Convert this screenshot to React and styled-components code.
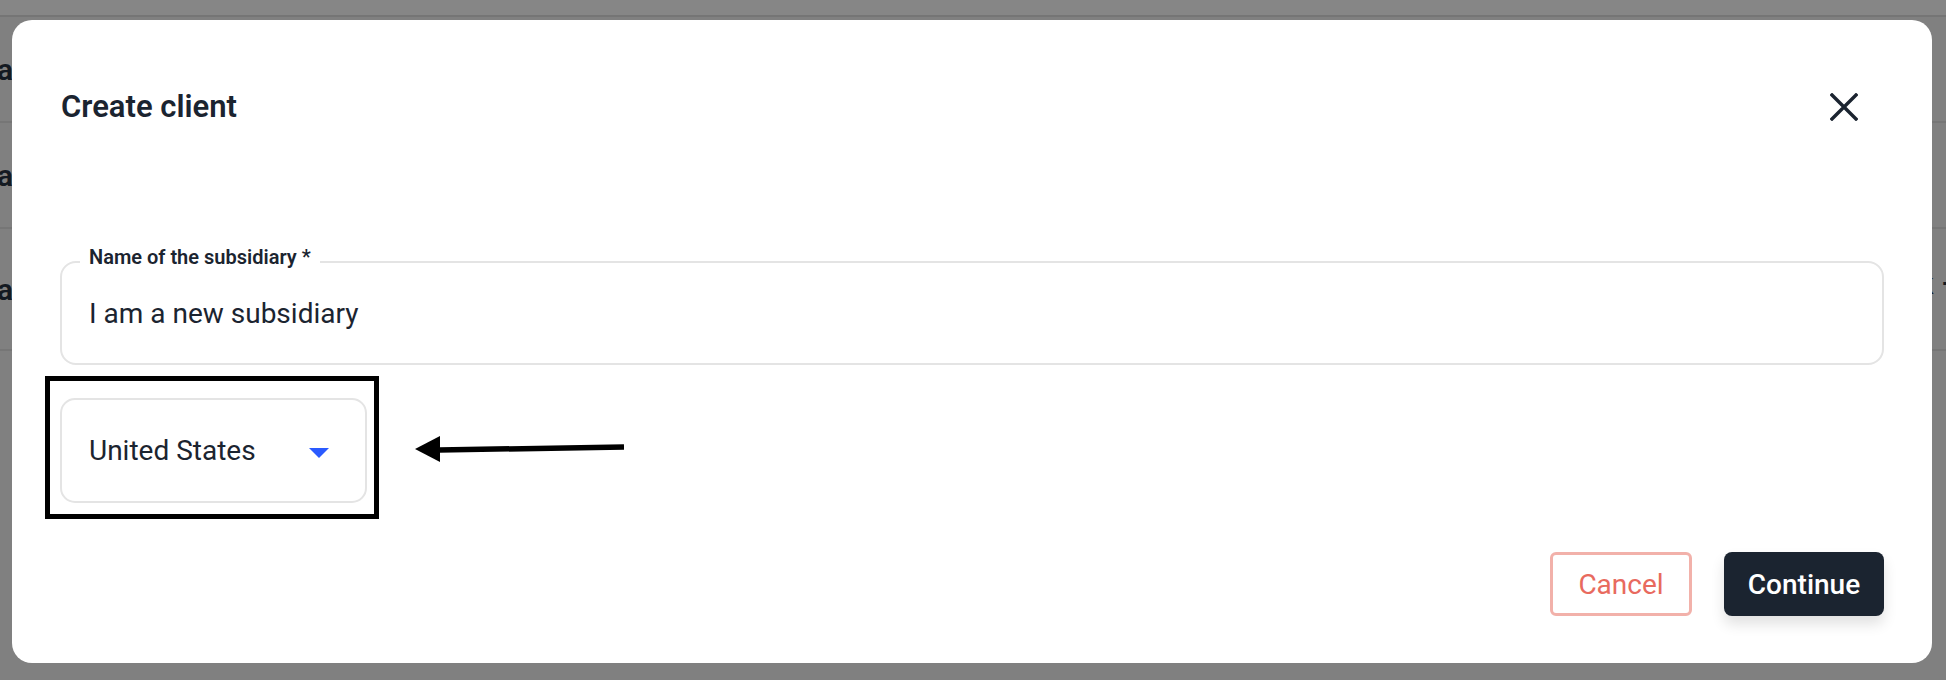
import React, { useState } from "react";
import styled, { createGlobalStyle } from "styled-components";

const GlobalStyle = createGlobalStyle`
  html, body {
    margin: 0;
    padding: 0;
    background: #808080;
    font-family: Roboto, "Liberation Sans", Arial, sans-serif;
  }
`;

const Page = styled.div`
  position: relative;
  width: 1946px;
  height: 680px;
  overflow: hidden;
  background: #808080;
`;

const TopStrip = styled.div`
  height: 15px;
  background: #868686;
  border-bottom: 2px solid #757575;
`;

const BgRow = styled.div`
  height: ${(p) => p.h}px;
  display: flex;
  align-items: center;
  justify-content: space-between;
  border-bottom: 2px solid #767676;
  box-sizing: border-box;
  font-size: 30px;
  font-weight: 600;
  color: #141a22;
`;

const BgCell = styled.span`
  margin-left: -3px;
`;

const BgCellRight = styled.span`
  margin-right: -14px;
  margin-top: -12px;
`;

const Modal = styled.div`
  position: absolute;
  top: 20px;
  left: 12px;
  width: 1920px;
  height: 643px;
  box-sizing: border-box;
  background: #fff;
  border-radius: 20px;
  padding: 69px 48px 47px 49px;
  display: flex;
  flex-direction: column;
`;

const Header = styled.div`
  display: flex;
  align-items: center;
  justify-content: space-between;
  height: 36px;
`;

const Title = styled.h2`
  margin: 0;
  font-size: 31px;
  line-height: 36px;
  font-weight: 600;
  color: #1b2430;
`;

const CloseButton = styled.button`
  border: none;
  background: none;
  padding: 0;
  margin-right: 26px;
  width: 28px;
  height: 28px;
  display: flex;
  cursor: pointer;
`;

const Field = styled.div`
  position: relative;
  margin-top: 136px;
  margin-left: -1px;
  height: 104px;
  box-sizing: border-box;
  border: 2px solid #e4e4e4;
  border-radius: 16px;
  display: flex;
  align-items: center;
  padding: 0 27px;
`;

const FieldLabel = styled.label`
  position: absolute;
  top: -18px;
  left: 18px;
  padding: 0 9px;
  background: #fff;
  font-size: 20px;
  line-height: 24px;
  font-weight: 600;
  color: #1b2430;
`;

const TextInput = styled.input`
  border: none;
  outline: none;
  width: 100%;
  padding: 0;
  font-family: inherit;
  font-size: 28px;
  color: #1b2430;
  background: transparent;
`;

const SelectRow = styled.div`
  display: flex;
  align-items: center;
  margin-top: 11px;
  margin-left: -16px;
`;

const Highlight = styled.div`
  border: 5px solid #000;
  padding: 17px 7px 11px 10px;
`;

const Select = styled.div`
  width: 307px;
  height: 105px;
  box-sizing: border-box;
  border: 2px solid #e4e4e4;
  border-radius: 15px;
  display: flex;
  align-items: center;
  justify-content: space-between;
  padding: 0 36px 0 27px;
  font-size: 28px;
  color: #1b2430;
  cursor: pointer;
`;

const Caret = styled.span`
  width: 0;
  height: 0;
  margin-top: 4px;
  border-left: 10px solid transparent;
  border-right: 10px solid transparent;
  border-top: 10px solid #2a5aff;
`;

const Pointer = styled.svg`
  margin-left: 36px;
  margin-top: 3px;
`;

const Footer = styled.div`
  margin-top: auto;
  display: flex;
  justify-content: flex-end;
  gap: 32px;
`;

const Button = styled.button`
  height: 64px;
  box-sizing: border-box;
  font-family: inherit;
  font-size: 28px;
  cursor: pointer;
  border-radius: ${(p) => (p.primary ? "8px" : "6px")};
  border: ${(p) => (p.primary ? "none" : "3px solid #f2b1aa")};
  background: ${(p) => (p.primary ? "#1b2430" : "#fff")};
  color: ${(p) => (p.primary ? "#fff" : "#e86a5e")};
  font-weight: ${(p) => (p.primary ? 500 : 400)};
  width: ${(p) => (p.primary ? "160px" : "142px")};
  box-shadow: ${(p) => (p.primary ? "0 8px 14px rgba(0,0,0,0.12)" : "none")};
`;

const App = () => {
  const [name, setName] = useState("I am a new subsidiary");

  return (
    <>
      <GlobalStyle />
      <Page>
        <TopStrip />
        <BgRow h={106}>
          <BgCell>al</BgCell>
        </BgRow>
        <BgRow h={106}>
          <BgCell>al</BgCell>
        </BgRow>
        <BgRow h={122}>
          <BgCell>al</BgCell>
          <BgCellRight>k –</BgCellRight>
        </BgRow>

        <Modal>
          <Header>
            <Title>Create client</Title>
            <CloseButton aria-label="Close">
              <svg width="28" height="28" viewBox="0 0 28 28">
                <path
                  d="M2 2 L26 26 M26 2 L2 26"
                  stroke="#1b2430"
                  strokeWidth="3.4"
                  strokeLinecap="square"
                />
              </svg>
            </CloseButton>
          </Header>

          <Field>
            <FieldLabel>Name of the subsidiary *</FieldLabel>
            <TextInput value={name} onChange={(e) => setName(e.target.value)} />
          </Field>

          <SelectRow>
            <Highlight>
              <Select>
                <span>United States</span>
                <Caret />
              </Select>
            </Highlight>
            <Pointer width="210" height="26" viewBox="0 0 210 26">
              <polygon points="0,13 25,0 25,26" fill="#000" />
              <path d="M24 14 L209 11" stroke="#000" strokeWidth="5.5" />
            </Pointer>
          </SelectRow>

          <Footer>
            <Button>Cancel</Button>
            <Button primary>Continue</Button>
          </Footer>
        </Modal>
      </Page>
    </>
  );
};

export default App;
